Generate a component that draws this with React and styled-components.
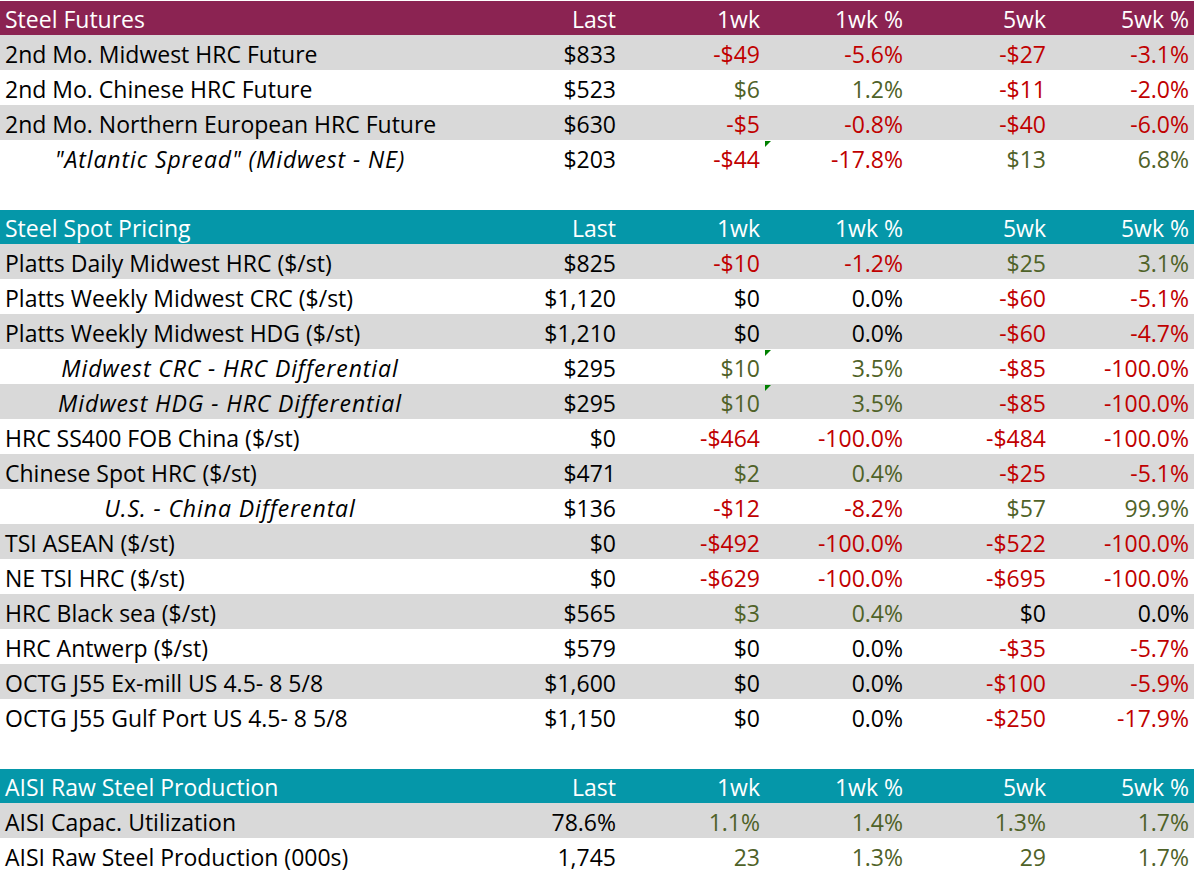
import React from 'react'
import styled, { createGlobalStyle, css } from 'styled-components'

const GlobalStyle = createGlobalStyle`
  html, body {
    margin: 0;
    padding: 0;
    background: #ffffff;
  }
  body {
    font-family: "Open Sans", Lato, sans-serif;
    overflow: hidden;
  }
`

const COLS = '460px 167px 144px 143px 143px 137px'

const Sheet = styled.div`
  width: 1194px;
  height: 876px;
  overflow: hidden;
  padding-top: 1px;
  box-sizing: border-box;
`

const Section = styled.section`
  display: flex;
  flex-direction: column;
  margin-bottom: 35px;
`

const Row = styled.div`
  display: grid;
  grid-template-columns: ${COLS};
  height: 35px;
  box-sizing: border-box;
  padding-top: 2px;
  align-items: center;
  font-size: 23px;
  color: #000;
  background: ${p => (p.$shade ? '#d9d9d9' : '#ffffff')};
`

const HeaderRow = styled(Row)`
  height: 34px;
  padding-top: 1px;
  color: #ffffff;
  background: ${p => p.$tone};
`

const Label = styled.div`
  padding-left: 5px;
  white-space: nowrap;

  ${p => p.$sub && css`
    font-style: italic;
    letter-spacing: 0.9px;
    text-align: center;
    padding-left: 0;
  `}
`

const Cell = styled.div`
  position: relative;
  align-self: stretch;
  display: flex;
  align-items: center;
  justify-content: flex-end;
  padding-right: ${p => (p.$edge ? '5px' : '11px')};
  white-space: nowrap;
  color: ${p => (p.$tone === 'neg' ? '#c00000' : p.$tone === 'pos' ? '#4f6228' : 'inherit')};
`

const Flag = styled.span`
  position: absolute;
  top: -1px;
  right: 0;
  width: 0;
  height: 0;
  border-top: 6px solid #008000;
  border-right: 6px solid transparent;
`

const futures = [
  ['2nd Mo. Midwest HRC Future', '$833', '-$49', '-5.6%', '-$27', '-3.1%'],
  ['2nd Mo. Chinese HRC Future', '$523', '$6', '1.2%', '-$11', '-2.0%'],
  ['2nd Mo. Northern European HRC Future', '$630', '-$5', '-0.8%', '-$40', '-6.0%'],
  ['"Atlantic Spread" (Midwest - NE)', '$203', '-$44', '-17.8%', '$13', '6.8%', { sub: true, flag: true }],
]

const spot = [
  ['Platts Daily Midwest HRC ($/st)', '$825', '-$10', '-1.2%', '$25', '3.1%'],
  ['Platts Weekly Midwest CRC ($/st)', '$1,120', '$0', '0.0%', '-$60', '-5.1%'],
  ['Platts Weekly Midwest HDG ($/st)', '$1,210', '$0', '0.0%', '-$60', '-4.7%'],
  ['Midwest CRC - HRC Differential', '$295', '$10', '3.5%', '-$85', '-100.0%', { sub: true, flag: true }],
  ['Midwest HDG - HRC Differential', '$295', '$10', '3.5%', '-$85', '-100.0%', { sub: true, flag: true }],
  ['HRC SS400 FOB China ($/st)', '$0', '-$464', '-100.0%', '-$484', '-100.0%'],
  ['Chinese Spot HRC ($/st)', '$471', '$2', '0.4%', '-$25', '-5.1%'],
  ['U.S. - China Differental', '$136', '-$12', '-8.2%', '$57', '99.9%', { sub: true }],
  ['TSI ASEAN ($/st)', '$0', '-$492', '-100.0%', '-$522', '-100.0%'],
  ['NE TSI HRC ($/st)', '$0', '-$629', '-100.0%', '-$695', '-100.0%'],
  ['HRC Black sea ($/st)', '$565', '$3', '0.4%', '$0', '0.0%'],
  ['HRC Antwerp ($/st)', '$579', '$0', '0.0%', '-$35', '-5.7%'],
  ['OCTG J55 Ex-mill US 4.5- 8 5/8', '$1,600', '$0', '0.0%', '-$100', '-5.9%'],
  ['OCTG J55 Gulf Port US 4.5- 8 5/8', '$1,150', '$0', '0.0%', '-$250', '-17.9%'],
]

const aisi = [
  ['AISI Capac. Utilization', '78.6%', '1.1%', '1.4%', '1.3%', '1.7%', { allPos: true }],
  ['AISI Raw Steel Production (000s)', '1,745', '23', '1.3%', '29', '1.7%', { allPos: true }],
]

const toneOf = (value, opts) => {
  if (opts && opts.allPos) return 'pos'
  if (value.startsWith('-')) return 'neg'
  if (value === '$0' || value === '0.0%') return 'plain'
  return 'pos'
}

const Block = ({ title, tone, rows }) => (
  <Section>
    <HeaderRow $tone={tone}>
      <Label>{title}</Label>
      <Cell>Last</Cell>
      <Cell>1wk</Cell>
      <Cell>1wk %</Cell>
      <Cell>5wk</Cell>
      <Cell $edge>5wk %</Cell>
    </HeaderRow>
    {rows.map(([label, last, w1, w1p, w5, w5p, opts = {}], i) => (
      <Row key={label} $shade={i % 2 === 0}>
        <Label $sub={opts.sub}>{label}</Label>
        <Cell>{last}</Cell>
        <Cell $tone={toneOf(w1, opts)}>
          {w1}
          {opts.flag && <Flag />}
        </Cell>
        <Cell $tone={toneOf(w1p, opts)}>{w1p}</Cell>
        <Cell $tone={toneOf(w5, opts)}>{w5}</Cell>
        <Cell $edge $tone={toneOf(w5p, opts)}>{w5p}</Cell>
      </Row>
    ))}
  </Section>
)

const App = () => (
  <Sheet>
    <GlobalStyle />
    <Block title="Steel Futures" tone="#8b2352" rows={futures} />
    <Block title="Steel Spot Pricing" tone="#0597a9" rows={spot} />
    <Block title="AISI Raw Steel Production" tone="#0597a9" rows={aisi} />
  </Sheet>
)

export default App
